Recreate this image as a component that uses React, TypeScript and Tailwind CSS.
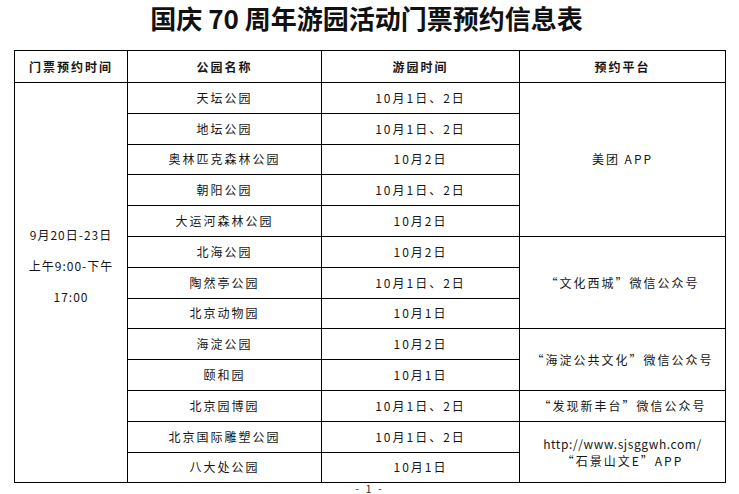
const cjk = { fontFamily: '"Noto Sans CJK SC", "Noto Sans", sans-serif' }

type Row = {
  park: string
  date: string
  platform?: { text: React.ReactNode; span: number }
}

const rows: Row[] = [
  { park: "天坛公园", date: "10月1日、2日", platform: { text: "美团 APP", span: 5 } },
  { park: "地坛公园", date: "10月1日、2日" },
  { park: "奥林匹克森林公园", date: "10月2日" },
  { park: "朝阳公园", date: "10月1日、2日" },
  { park: "大运河森林公园", date: "10月2日" },
  { park: "北海公园", date: "10月2日", platform: { text: "“文化西城”微信公众号", span: 3 } },
  { park: "陶然亭公园", date: "10月1日、2日" },
  { park: "北京动物园", date: "10月1日" },
  { park: "海淀公园", date: "10月2日", platform: { text: "“海淀公共文化”微信公众号", span: 2 } },
  { park: "颐和园", date: "10月1日" },
  { park: "北京园博园", date: "10月1日、2日", platform: { text: "“发现新丰台”微信公众号", span: 1 } },
  {
    park: "北京国际雕塑公园",
    date: "10月1日、2日",
    platform: {
      text: (
        <div className="leading-[17px]">
          <div className="tracking-[0.6px]">http://www.sjsggwh.com/</div>
          <div>“石景山文E”APP</div>
        </div>
      ),
      span: 2,
    },
  },
  { park: "八大处公园", date: "10月1日" },
]

export default function App() {
  return (
    <div className="bg-white w-[739px] text-[#161616]" style={cjk}>
      <h1 className="text-center text-[26px] leading-[34px] font-bold pt-[1px] pr-[6px] text-[#111]">
        国庆 70 周年游园活动门票预约信息表
      </h1>

      <table className="ml-[14px] mt-[15px] w-[711px] table-fixed border-collapse text-[12px] tracking-[2px]">
        <colgroup>
          <col className="w-[113px]" />
          <col className="w-[194px]" />
          <col className="w-[198px]" />
          <col className="w-[206px]" />
        </colgroup>
        <thead>
          <tr className="h-[32px] font-bold">
            <th className="border border-black text-center">门票预约时间</th>
            <th className="border border-black text-center">公园名称</th>
            <th className="border border-black text-center">游园时间</th>
            <th className="border border-black text-center">预约平台</th>
          </tr>
        </thead>
        <tbody>
          {rows.map((r, i) => (
            <tr key={r.park} className="h-[30.8px]">
              {i === 0 && (
                <td rowSpan={13} className="border border-black text-center align-middle pb-[34px] leading-[31px] tracking-[1px]">
                  9月20日-23日
                  <br />
                  上午9:00-下午
                  <br />
                  17:00
                </td>
              )}
              <td className="border border-black text-center p-0">{r.park}</td>
              <td className="border border-black text-center p-0">{r.date}</td>
              {r.platform && (
                <td rowSpan={r.platform.span} className="border border-black text-center align-middle p-0">
                  {r.platform.text}
                </td>
              )}
            </tr>
          ))}
        </tbody>
      </table>

      <div className="text-center text-[11px] leading-[11px] tracking-[2px] text-[#333]">- 1 -</div>
    </div>
  )
}
